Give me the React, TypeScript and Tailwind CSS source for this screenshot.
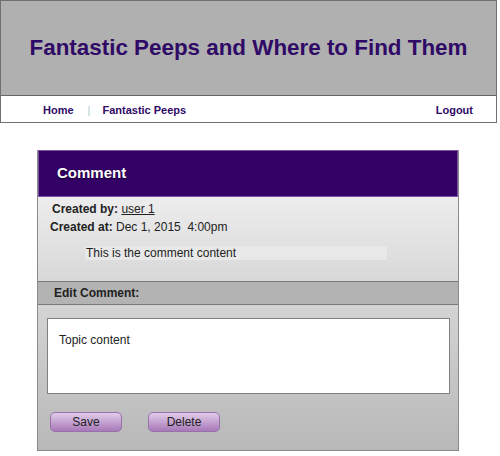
export default function App() {
  return (
    <div className="min-h-[456px] bg-white font-['Liberation_Sans',Arial,sans-serif] text-[#222]">
      <header className="w-[497px] border border-[#707070]">
        <div className="flex h-[94px] items-center justify-center bg-[#b0b0b0]">
          <h1 className="text-[22.4px] font-bold text-[#2f0a66]">Fantastic Peeps and Where to Find Them</h1>
        </div>
        <nav className="flex h-[27px] items-center border-t border-[#666] pl-[42px] pr-[23px] pt-[2px] text-[11px] font-bold text-[#2f0a66]">
          <a className="cursor-pointer">Home</a>
          <span className="ml-[14px] mr-[12px] font-normal text-[#a8cccc]">|</span>
          <a className="cursor-pointer">Fantastic Peeps</a>
          <a className="ml-auto cursor-pointer">Logout</a>
        </nav>
      </header>

      <section className="ml-[37px] mt-[27px] w-[422px] border-x border-b border-[#8a8a8a]">
        <div className="flex h-[47px] items-center border border-[#7c52a6] bg-[#330066] pl-[18px]">
          <h2 className="text-[15px] font-bold text-white [text-shadow:0_1px_1px_rgba(0,0,0,0.7)]">Comment</h2>
        </div>
        <div className="h-[84px] bg-gradient-to-b from-[#ededed] to-[#d8d8d8] pt-[3px] text-[12px]">
          <p className="pl-[14px] leading-[18px]">
            <b>Created by:</b> <span className="underline">user 1</span>
          </p>
          <p className="pl-[12px] leading-[18px] whitespace-pre">
            <b>Created at:</b> Dec 1, 2015  4:00pm
          </p>
          <p className="ml-[47px] mt-[10px] w-[302px] bg-[#e8e8e8] pl-[1px] leading-[14px]">This is the comment content</p>
        </div>
        <div className="flex h-[24px] items-center border-y border-[#7a7a7a] bg-[#b3b3b3] pl-[16px] text-[12px] font-bold">
          Edit Comment:
        </div>
        <div className="h-[145px] bg-gradient-to-b from-[#d4d4d4] to-[#b8b8b8] px-[9px] pt-[13px]">
          <div className="h-[76px] w-[403px] border border-[#808080] bg-white px-[11px] pt-[12px] text-[12px]">Topic content</div>
          <div className="mt-[18px] flex gap-[26px] pl-[3px]">
            <button className="h-[20px] w-[72px] rounded-[5px] border border-[#9a70aa] bg-gradient-to-b from-[#e2cde9] to-[#a779b8] text-[12px] text-[#222]">
              Save
            </button>
            <button className="h-[20px] w-[72px] rounded-[5px] border border-[#9a70aa] bg-gradient-to-b from-[#e2cde9] to-[#a779b8] text-[12px] text-[#222]">
              Delete
            </button>
          </div>
        </div>
      </section>
    </div>
  );
}
